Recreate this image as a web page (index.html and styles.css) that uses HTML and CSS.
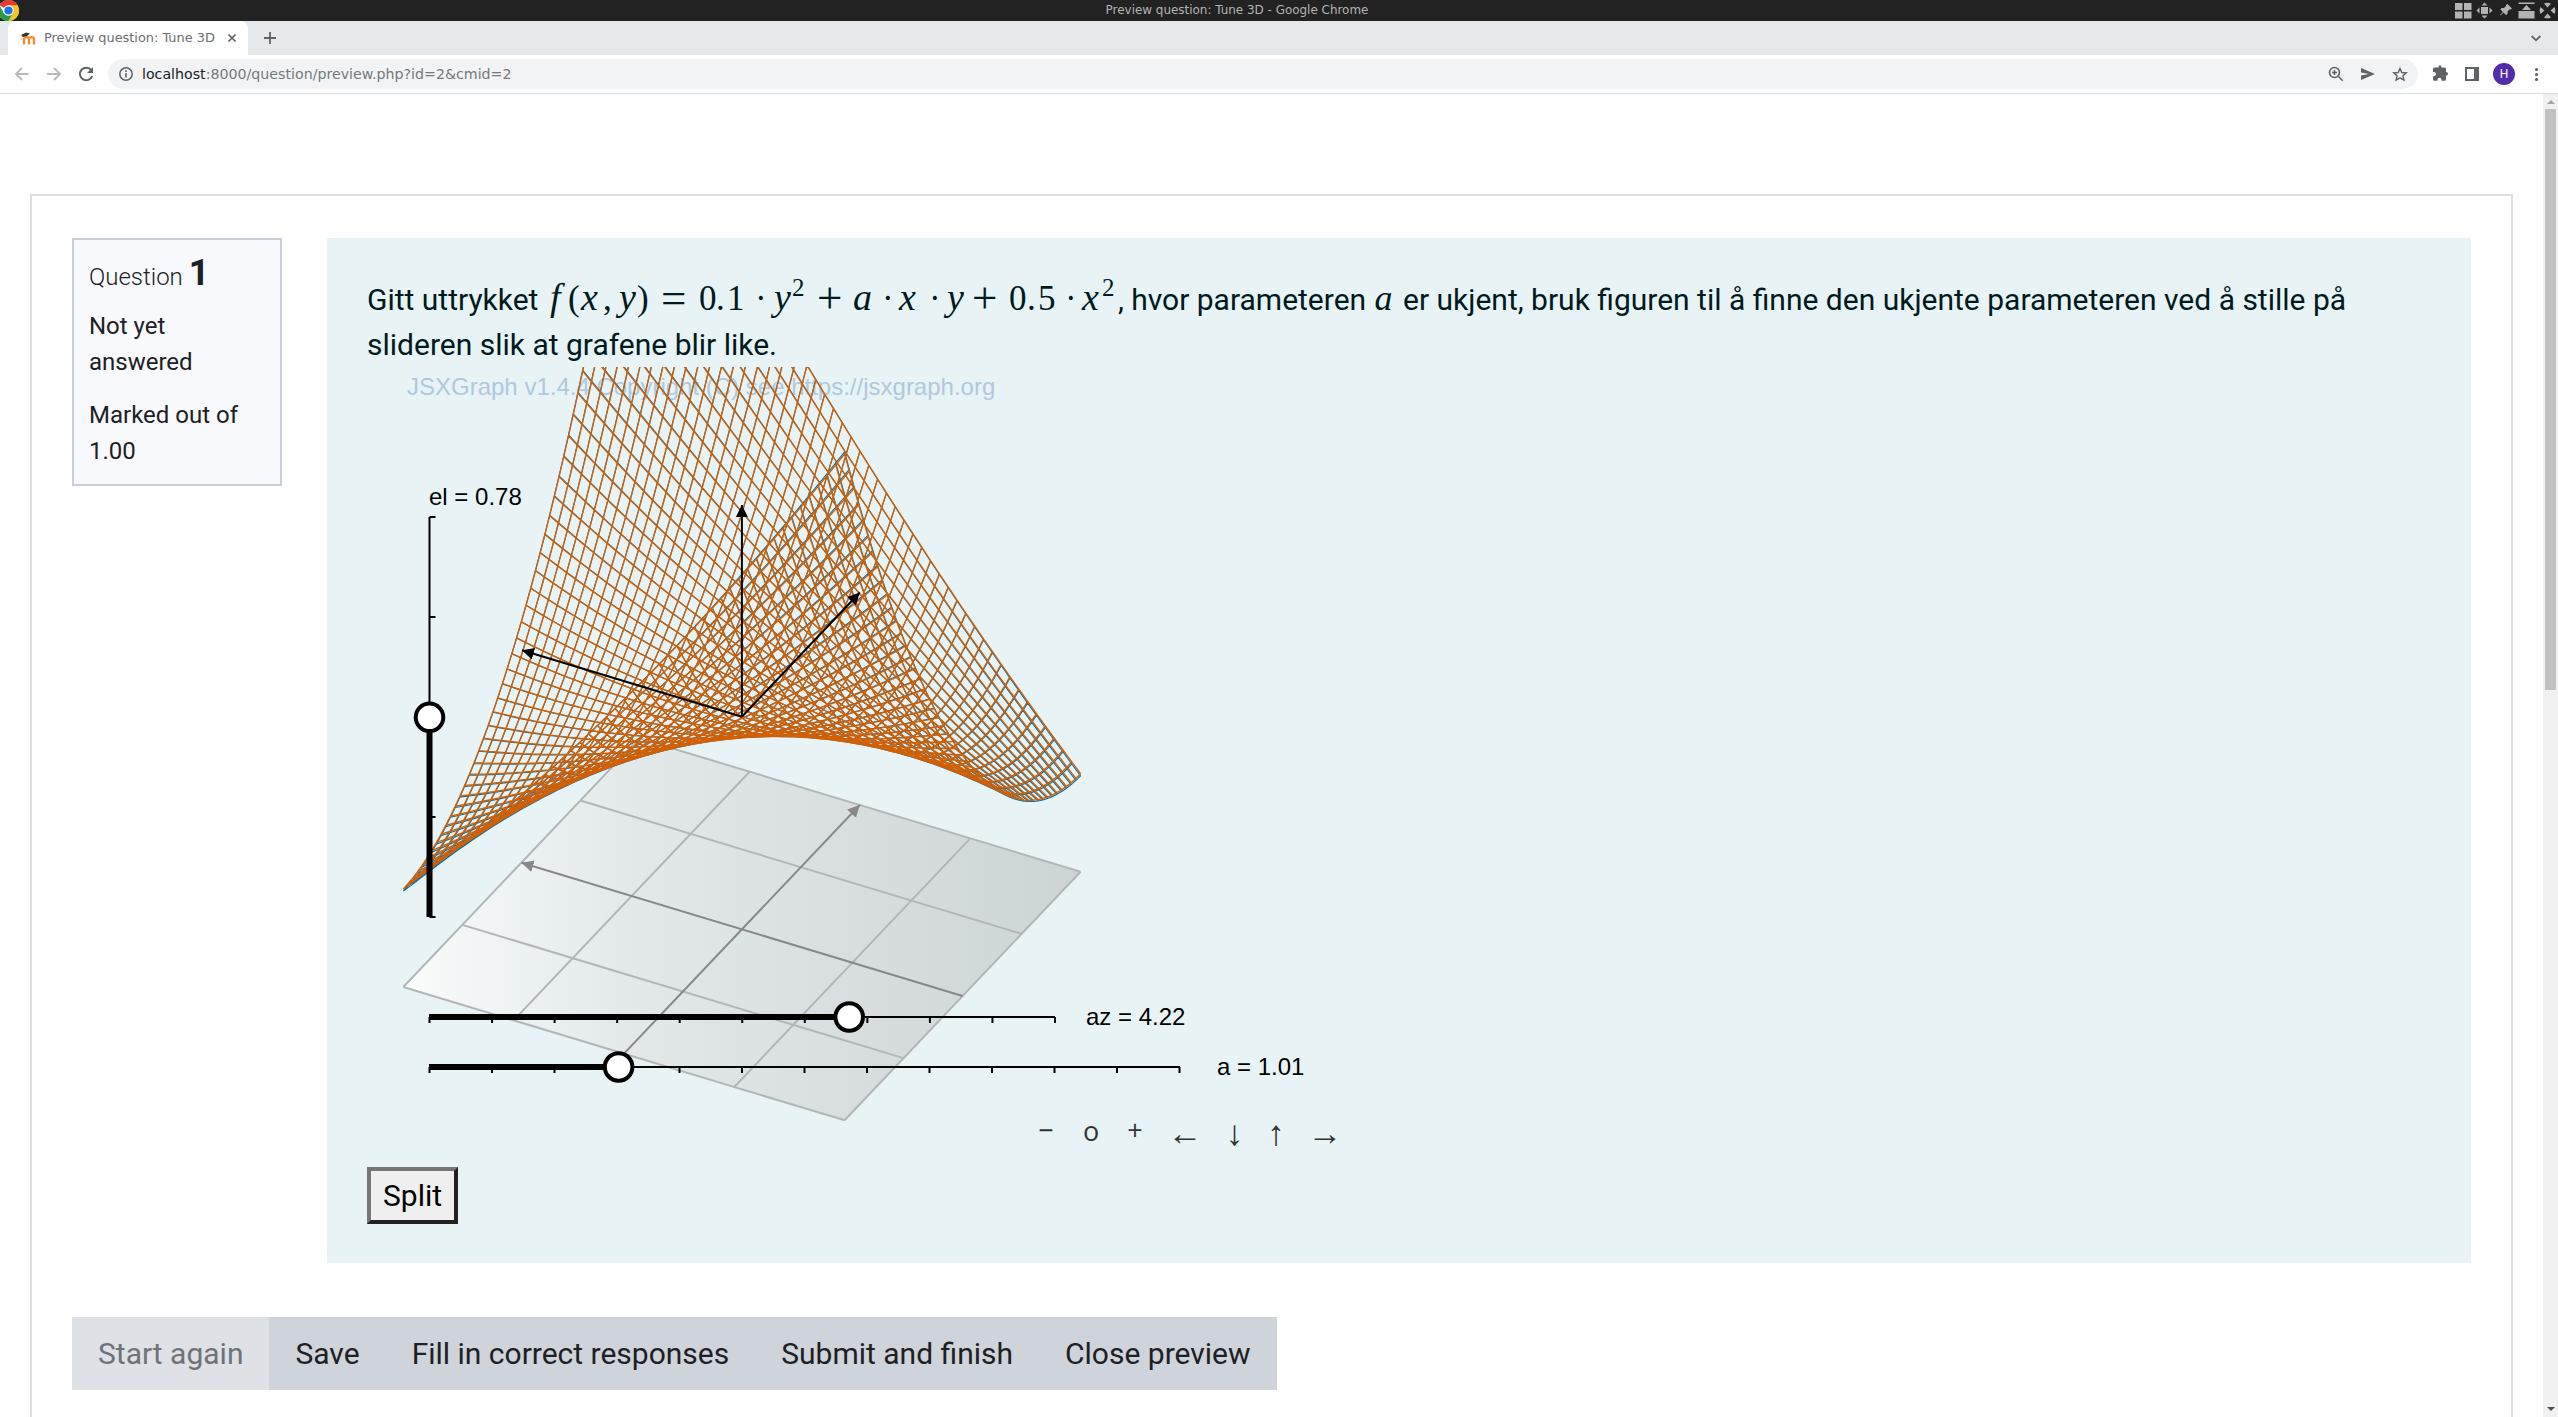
FILE: index.html
```html
<!DOCTYPE html>
<html lang="no">
<head>
<meta charset="utf-8">
<title>Preview question: Tune 3D</title>
<link rel="stylesheet" href="styles.css">
</head>
<body>
<header class="titlebar">
  <svg class="chrome-logo" viewBox="0 0 48 48"><circle cx="24" cy="24" r="24" fill="#fff"/><path d="M24 24 3.2 12A24 24 0 0 1 44.8 12z" fill="#e33b2e"/><path d="M24 12H44.8A24 24 0 0 1 24 48L34.4 30z" fill="#fcc31e"/><path d="M13.6 30 3.2 12A24 24 0 0 0 24 48L34.4 30z" fill="#2a9a48"/><circle cx="24" cy="24" r="12" fill="#fff"/><circle cx="24" cy="24" r="9.4" fill="#1a73e8"/></svg>
  <span class="window-title">Preview question: Tune 3D - Google Chrome</span>
  <svg class="window-buttons" viewBox="0 0 106 21" fill="#b3b3b3"><path d="M3 3h7.500v7H3zM12 3h7.500v7H12zM3 11.500h7.500v7H3zM12 11.500h7.500v7H12zM29 7h7v7h-7zM29.500 5.500 32.500 2.500l3 3zM29.500 15.500l3 3 3-3zM27.500 7.500l-3 3 3 3zM37.500 7.500l3 3-3 3zM55.500 4l4.500 4.500-1.500 1h-1l-2 2v2.500l-1.500 1-2.500-2.500-2.500 2.500-1 .5.500-1 2.500-2.500-2.500-2.500 1-1.500h2.500l2-2V5zM66.500 2.500h16V4h-16zM66.500 11h16v7.500h-16zM70 10l4.500-5 4.500 5z"/><path d="M92 3.500A8 8 0 0 1 99 3.500L95.500 7.500zM92 17.500A8 8 0 0 0 99 17.500L95.500 13.500zM88.500 7A8 8 0 0 0 88.500 14L92.500 10.500zM102.500 7A8 8 0 0 1 102.500 14L98.500 10.500z"/></svg>
</header>
<nav class="tabs">
  <div class="tab">
    <svg class="favicon" viewBox="0 0 16 13"><path d="M4 12.500V7.500q0-2.300 2.500-2.300T9 7.500v5M9 7.500q0-2.300 2.500-2.300T14 7.500v5" fill="none" stroke="#f28b30" stroke-width="2.300"/><path d="M1 3 6 .5l4 1-3 2.500-4 1z" fill="#333"/><path d="M1.200 3v5" stroke="#f4b9a0" stroke-width=".8"/></svg>
    <span class="tab-title">Preview question: Tune 3D</span>
    <svg class="close" viewBox="0 0 10 10"><path d="m1.500 1.500 7 7M8.500 1.500l-7 7" stroke="#5f6368" stroke-width="1.700"/></svg>
  </div>
  <svg class="new-tab" viewBox="0 0 12 12"><path d="M6 0v12M0 6h12" stroke="#5f6368" stroke-width="1.800"/></svg>
  <svg class="tab-search" viewBox="0 0 10 7"><path d="m.7 1 4.300 4.300L9.300 1" fill="none" stroke="#5f6368" stroke-width="1.800"/></svg>
</nav>
<div class="toolbar">
  <svg class="nav-icons" viewBox="0 0 84 20" fill="none" stroke-width="1.800"><path d="M14.500 10H2M8 4l-6 6 6 6M33 10h13M40 4l6 6-6 6" stroke="#bababa"/><path d="M77.300 6.200A6.300 6.300 0 1 0 78.200 12" stroke="#5f6368" stroke-width="2"/><path d="M79 3v6h-6z" fill="#5f6368"/></svg>
  <div class="omnibox">
    <svg class="info" viewBox="0 0 14 14"><circle cx="7" cy="7" r="6.200" fill="none" stroke="#5f6368" stroke-width="1.500"/><path d="M7 6v4.500M7 3.300v1.700" stroke="#5f6368" stroke-width="1.600"/></svg>
    <span class="url"><b>localhost</b>:8000/question/preview.php?id=2&amp;cmid=2</span>
    <svg class="omni-icons" viewBox="0 0 84 20" fill="none" stroke="#5f6368" stroke-width="1.600"><circle cx="6.500" cy="8.500" r="5"/><path d="m10.500 12.500 4.200 4.200M4 8.500h5M6.500 6v5"/><path d="M33 4v4.500l8 1.500-8 1.500V16l14-6z" fill="#5f6368" stroke="none"/><path d="m72 4.500 1.800 4 4.400.4-3.300 2.900 1 4.300-3.900-2.300-3.900 2.300 1-4.300-3.300-2.900 4.400-.4z" stroke-width="1.400"/></svg>
  </div>
  <svg class="right-icons" viewBox="0 0 124 24"><path d="M10.500 5.500H6.500q-1.500 0-1.500 1.500v3h1q2 .3 2 2t-2 2.200H5v3q0 1.500 1.500 1.500h3v-1q.2-2 2-2t2 2v1h3q1.500 0 1.500-1.500v-3.500q2 0 2-1.800t-2-1.800V7q0-1.500-1.500-1.500h-3q0-2.200-1.500-2.200T10.500 5.500z" fill="#5f6368"/><path d="M37 5h14v14H37zM39 7v10h7V7z" fill="#5f6368" fill-rule="evenodd"/><circle cx="76" cy="12" r="11" fill="#512da8"/><text x="76" y="16" class="avatar-letter">H</text><g fill="#5f6368"><circle cx="108.500" cy="7.500" r="1.600"/><circle cx="108.500" cy="12.500" r="1.600"/><circle cx="108.500" cy="17.500" r="1.600"/></g></svg>
</div>
<div class="viewport">
  <main class="page">
    <div class="question">
      <aside class="info-box">
        <h3>Question <strong>1</strong></h3>
        <p>Not yet answered</p>
        <p>Marked out of 1.00</p>
      </aside>
      <section class="formulation">
        <p class="prompt">Gitt uttrykket <svg class="formula" viewBox="0 0 569 45"><text y="31"><tspan class="mi" x="4 35">fx</tspan><tspan x="22 57">(,</tspan><tspan class="mi" x="73">y</tspan><tspan x="91">)</tspan><tspan class="op" x="115" y="34">=</tspan><tspan x="153 170 181 209" y="31">0.1·</tspan><tspan class="mi" x="228">y</tspan><tspan class="op" x="271" y="34">+</tspan><tspan class="mi" x="307" y="31">a</tspan><tspan x="336">·</tspan><tspan class="mi" x="353">x</tspan><tspan x="383">·</tspan><tspan class="mi" x="401">y</tspan><tspan class="op" x="426" y="34">+</tspan><tspan x="463 481 492 519" y="31">0.5·</tspan><tspan class="mi" x="536">x</tspan></text><text class="sup" x="246 556" y="17">22</text></svg>, hvor parameteren <i class="var">a</i> er ukjent, bruk figuren til å finne den ukjente parameteren ved å stille på slideren slik at grafene blir like.</p>
        <svg class="board" viewBox="367 367 1000 783">
          <defs>
            <linearGradient id="floor"><stop offset="0" stop-color="#f8fcfb"/><stop offset=".33" stop-color="#e3e8e9"/><stop offset="1" stop-color="#cdd4d5"/></linearGradient>
            <marker id="tip" markerUnits="userSpaceOnUse" markerWidth="14" markerHeight="14" refX="12" refY="6" orient="auto"><path d="M0 0 12 6 0 12z"/></marker>
            <marker id="tip-gray" markerUnits="userSpaceOnUse" markerWidth="14" markerHeight="14" refX="12" refY="6" orient="auto"><path d="M0 0 12 6 0 12z" fill="#888"/></marker>
          </defs>
          <text class="copyright" x="407" y="395">JSXGraph v1.4.4 Copyright (C) see https://jsxgraph.org</text>
          <path d="M403.300 987 844.600 1120.300 1080.600 871.700 639.300 738.400z" fill="url(#floor)"/>
          <path id="grid" fill="none" stroke="#b3b6b7" stroke-width="2"/>
          <g stroke="#888" stroke-width="2"><path d="M962.500 996 521.500 862.700" marker-end="url(#tip-gray)"/><path d="M624 1053.600 859.800 805" marker-end="url(#tip-gray)"/></g>
          <path id="target" class="mesh" stroke="#0072b2"/>
          <path id="surface" class="mesh front" stroke="#d55e00"/>
          <g stroke="#000" stroke-width="2"><path d="M741.900 716.700 522 650.300" marker-end="url(#tip)"/><path d="M741.900 716.700 859.800 592.500" marker-end="url(#tip)"/><path d="M741.900 716.700V505" marker-end="url(#tip)"/></g>
          <g fill="none" stroke="#000" stroke-width="2"><path d="M429.500 517V917M429.500 517h6M429.500 617h6M429.500 817h6M429.500 917h6"/><path id="ticks"/><path d="M429 1017H1055M429 1067H1180"/><path d="M429.500 717V917M429 1017H849M429 1067H619" stroke-width="6"/></g>
          <g fill="#fff" stroke="#000" stroke-width="4"><circle cx="429.500" cy="717.300" r="13.800"/><circle cx="849.200" cy="1017" r="13.800"/><circle cx="618.600" cy="1067" r="13.800"/></g>
          <g class="label"><text x="429" y="505">el = 0.78</text><text x="1086" y="1025">az = 4.22</text><text x="1217" y="1075">a = 1.01</text></g>
          <g class="controls"><text x="1046" y="1140">−</text><text x="1091" y="1140.500">o</text><text x="1135" y="1140">+</text><g class="arrows"><text x="1185" y="1144.500">←</text><text x="1234.500" y="1144.500">↓</text><text x="1276" y="1144.500">↑</text><text x="1325" y="1144.500">→</text></g></g>
        </svg>
        <button class="split">Split</button>
      </section>
    </div>
    <div class="actions"><button disabled>Start again</button><button>Save</button><button>Fill in correct responses</button><button>Submit and finish</button><button>Close preview</button></div>
  </main>
  <div class="scrollbar"><i class="up"></i><div class="thumb"></div><i class="down"></i></div>
</div>
<script src="surface.js"></script>
</body>
</html>
```
FILE: styles.css
```css
* { box-sizing: border-box; }
body { margin: 0; height: 1417px; overflow: hidden; display: flex; flex-direction: column; background: #fff; font: 30px/45px Roboto, sans-serif; color: #1d2125; }
svg { display: block; flex: none; }
button { font: inherit; }
.titlebar { height: 21px; flex: none; background: #222; display: flex; align-items: center; justify-content: space-between; }
.chrome-logo { width: 21px; height: 21px; margin: 0 3px 0 -2px; }
.window-title { font: 11.950px/21px "DejaVu Sans", sans-serif; color: #b3b3b3; }
.window-buttons { width: 106px; height: 21px; }
.tabs { height: 34px; flex: none; background: #e5e9ec; display: flex; align-items: center; padding: 0 17px 0 8px; }
.tab { width: 240px; height: 34px; background: #fff; border-radius: 8px 8px 0 0; display: flex; align-items: center; padding: 0 11px 0 12px; }
.favicon { width: 16px; height: 13px; }
.tab-title { font: 12.900px/34px "DejaVu Sans", sans-serif; color: #6b6e72; margin-left: 8px; flex: 1; white-space: nowrap; }
.close { width: 10px; height: 10px; }
.new-tab { width: 12px; height: 12px; margin-left: 16px; }
.tab-search { width: 10px; height: 7px; margin-left: auto; }
.toolbar { height: 39px; flex: none; border-bottom: 1px solid #dadce0; display: flex; align-items: center; }
.nav-icons { width: 84px; height: 20px; margin: 0 10px 0 14px; }
.omnibox { width: 2310px; height: 30px; border-radius: 15px; background: #f1f3f4; display: flex; align-items: center; padding: 0 6px 0 11px; }
.info { width: 14px; height: 14px; margin-right: 9px; }
.url { font: 14.200px/30px "DejaVu Sans", sans-serif; color: #75797d; flex: 1; }
.url b { color: #202124; font-weight: 400; }
.omni-icons { width: 84px; height: 20px; }
.right-icons { width: 124px; height: 24px; margin-left: 10px; }
.avatar-letter { font: 12px Roboto, sans-serif; fill: #fff; text-anchor: middle; }
.viewport { flex: 1; min-height: 0; display: flex; justify-content: space-between; }
.page { width: 2483px; margin: 100px 0 0 30px; border: 2px solid #dedfe0; border-bottom: 0; padding: 42px 40px 0; overflow: hidden; }
.question { display: flex; align-items: flex-start; gap: 45px; }
.info-box { width: 210px; height: 248px; background: #f8f9fc; border: 2px solid #cad0d7; padding: 11px 15px 0; font-size: 24px; line-height: 36px; }
.info-box h3 { margin: 0 0 9px; font-size: 24px; font-weight: 300; line-height: 44px; white-space: nowrap; }
.info-box strong { font-size: 36px; font-weight: 700; }
.info-box p { margin: 0 0 17px; }
.formulation { width: 2144px; height: 1025px; background: #e7f3f5; color: #001a1e; padding: 39px 40px 0; }
.prompt { margin: 0; width: 2050px; height: 90px; }
.formula { display: inline-block; width: 569px; height: 45px; margin: -12px 3px -12px 0; vertical-align: -2px; overflow: visible; font: 35px "Liberation Serif", serif; fill: #001a1e; }
.mi { font-size: 38px; font-style: italic; }
.op { font-size: 45px; }
.sup { font-size: 25px; }
.var { font: italic 36px/0 "Liberation Serif", serif; margin: 0 3px 0 1px; }
.board { width: 1000px; height: 783px; overflow: hidden; }
.mesh { fill: none; stroke-width: 1.100; }
.front { stroke-width: 1.350; }
.copyright { font: 24px "Liberation Sans", sans-serif; fill: #b0c9de; }
.label { font: 24px "Liberation Sans", sans-serif; fill: #000; }
.controls { font: 27px "Open Sans", sans-serif; fill: #333; text-anchor: middle; }
.arrows { font: 35px "Liberation Sans", sans-serif; }
.split { display: block; width: 91px; height: 57px; margin-top: 17px; border: 4px outset #767676; background: #efefef; color: #000; padding: 0; line-height: 45px; }
.actions { display: flex; margin-top: 54px; }
.actions button { height: 73px; border: 0; padding: 0 26px; background: #cfd3da; color: #1d2125; white-space: nowrap; }
.actions button:disabled { background: #dee2e6; color: #6f7378; }
.scrollbar { width: 15px; background: #f1f1f1; display: flex; flex-direction: column; align-items: center; padding: 6px 0; }
.up { border: 4px solid transparent; border-top: 0; border-bottom-color: #a3a3a3; }
.thumb { width: 11px; height: 581px; margin-top: 5px; background: #c1c1c1; }
.down { margin-top: auto; border: 4px solid transparent; border-bottom: 0; border-top-color: #505050; }
```
FILE: surface.js
```js
// Orthographic projection of the cube; s and b run from -1 to 1.
function project(s, b, height) {
  return (741.95 - 118 * s + 220.65 * b).toFixed(2) + ' ' +
    (929.35 + 124.3 * s + 66.65 * b - height).toFixed(2);
}

// z = 0.1 y² + a x y + 0.5 x², drawn as two families of grid curves.
function mesh(a) {
  const n = 50;
  const point = (s, b) => project(s, b, 212.65 + 282.5 * (0.1 * b * b + a * s * b + 0.5 * s * s));
  let d = '';
  for (let i = 0; i <= n; i++) {
    const row = [], column = [];
    for (let j = 0; j <= n; j++) {
      row.push(point(2 * i / n - 1, 2 * j / n - 1));
      column.push(point(2 * j / n - 1, 2 * i / n - 1));
    }
    d += 'M' + row.join('L') + 'M' + column.join('L');
  }
  return d;
}

let grid = '';
for (const t of [-1, -0.5, 0.5, 1]) {
  grid += 'M' + project(t, -1, 0) + 'L' + project(t, 1, 0);
  grid += 'M' + project(-1, t, 0) + 'L' + project(1, t, 0);
}
document.getElementById('grid').setAttribute('d', grid);
document.getElementById('target').setAttribute('d', mesh(1.0135));
document.getElementById('surface').setAttribute('d', mesh(1.006));

let ticks = '';
for (let i = 0; i <= 10; i++) ticks += 'M' + (429.5 + 62.55 * i) + ' 1017v6';
for (let i = 0; i <= 12; i++) ticks += 'M' + (429.5 + 62.5 * i) + ' 1067v6';
document.getElementById('ticks').setAttribute('d', ticks);
```
